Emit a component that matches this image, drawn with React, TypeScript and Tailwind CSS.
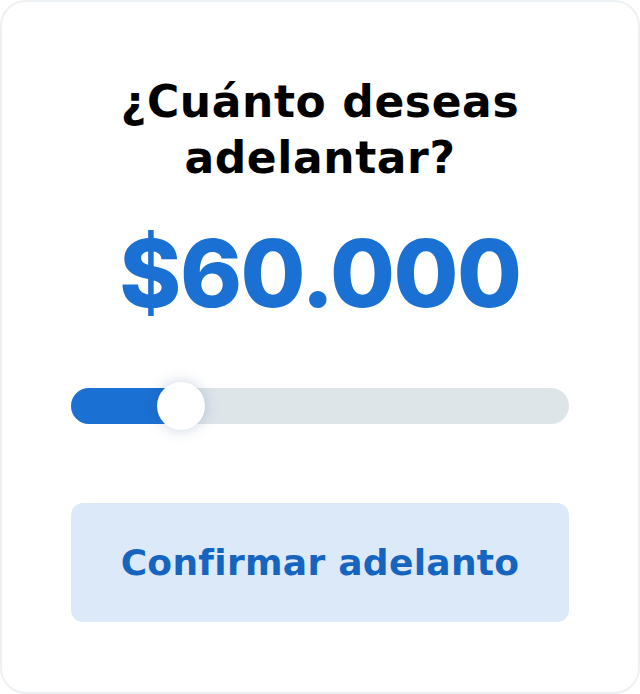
export default function App() {
  const percent = 22

  return (
    <div className="w-[640px] h-[694px] bg-white border-2 border-[#eef1f3] rounded-[26px] flex flex-col items-center px-[69px] pt-[72px] font-['Inter',sans-serif]">
      <h1 className="text-[44px] leading-[56px] font-bold text-black text-center tracking-[0.6px] font-['DejaVu_Sans',sans-serif]">
        ¿Cuánto deseas
        <br />
        adelantar?
      </h1>

      <div className="mt-[31px] text-[94px] leading-[112px] font-extrabold text-[#1a70d3] tracking-[-1.5px]">
        $60.000
      </div>

      {/* Slider */}
      <div className="mt-[59px] w-full h-9 rounded-full bg-[#dee5e9] relative">
        <div className="h-full rounded-full bg-[#1a70d3]" style={{ width: `${percent}%` }} />
        <div
          className="absolute top-1/2 w-12 h-12 -translate-x-1/2 -translate-y-1/2 rounded-full bg-white shadow-[0_0_14px_rgba(40,80,140,0.25)]"
          style={{ left: `${percent}%` }}
        />
      </div>

      <button className="mt-[79px] w-full h-[119px] rounded-xl bg-[#dce9f8] text-[#1565c0] text-[36px] font-bold tracking-[0.3px] font-['DejaVu_Sans',sans-serif]">
        Confirmar adelanto
      </button>
    </div>
  )
}
